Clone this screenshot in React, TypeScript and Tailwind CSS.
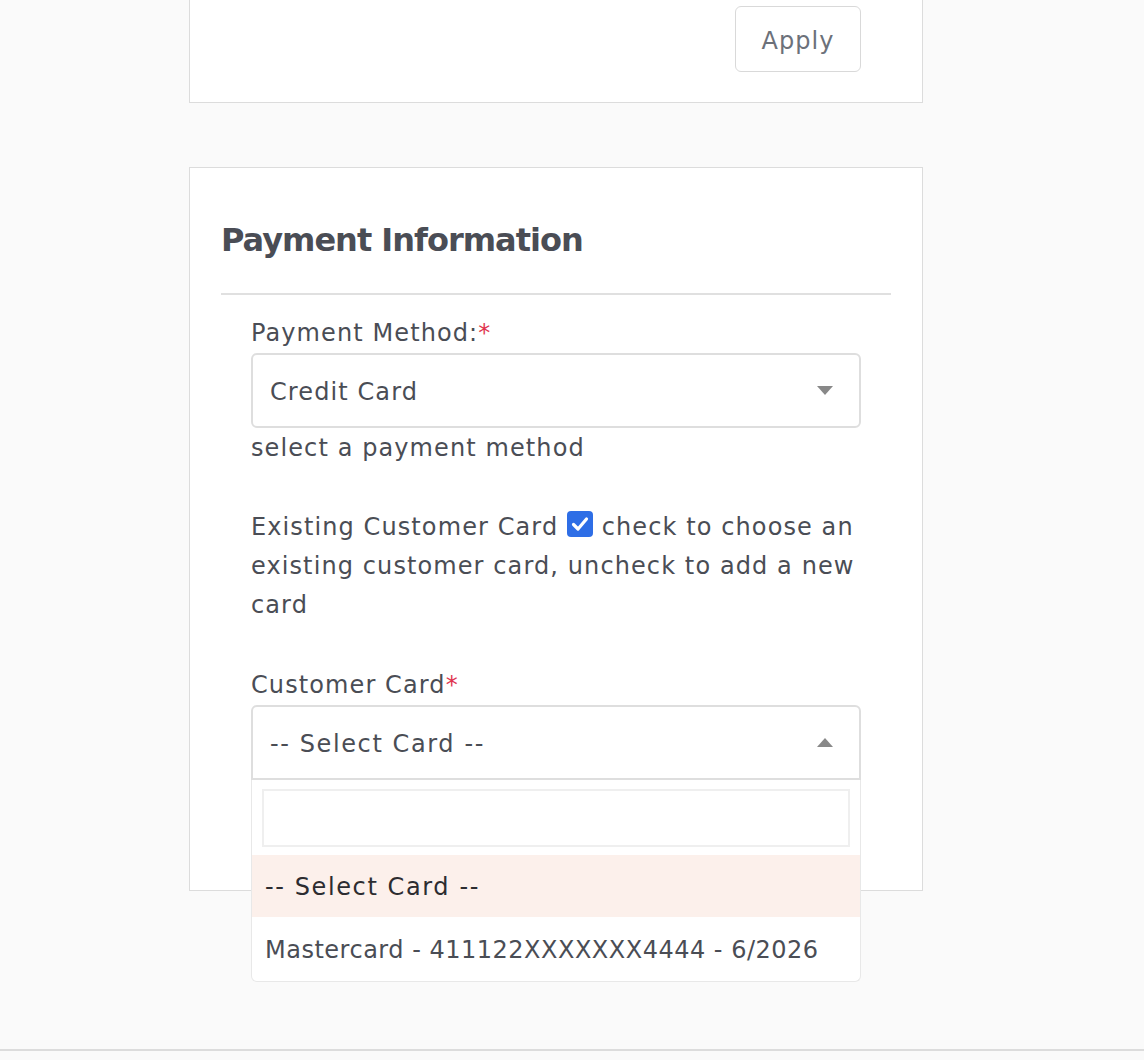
import React from "react";

const font = { fontFamily: '"DejaVu Sans", "Noto Sans", sans-serif' };

function Caret({ up }: { up?: boolean }) {
  return (
    <svg width="16" height="9" viewBox="0 0 16 9" className="block">
      {up ? <polygon points="0,9 16,9 8,0" fill="#888888" /> : <polygon points="0,0 16,0 8,9" fill="#888888" />}
    </svg>
  );
}

export default function App() {
  return (
    <div className="min-h-[1060px] w-full bg-[#fafafa] text-[#4a4d55]" style={font}>
      <div className="flex flex-col" style={{ height: 1049 }}>
        <div className="ml-[189px] w-[734px] h-[103px] bg-white border-x border-b border-[#dcdcdc] flex justify-end items-start pr-[61px] pt-[6px]">
          <button className="w-[126px] h-[66px] rounded-[6px] border border-[#d9d9d9] bg-white text-[24px] text-[#6c717a] tracking-[1px] pt-[3px]">
            Apply
          </button>
        </div>

        <div className="ml-[189px] mt-[64px] w-[734px] h-[724px] bg-white border border-[#dcdcdc] px-[31px] pt-[52px]">
          <h2 className="text-[32px] leading-[41px] font-semibold text-[#4a4d55] tracking-[-1px]">Payment Information</h2>
          <div className="mt-[32px] h-[2px] bg-[#e0e0e0]" />
          <div className="ml-[30px] mr-[30px] mt-[19px] flex flex-col text-[24px] leading-[39px] tracking-[1.1px]">
            <label>
              Payment Method:<span className="text-[#e0344f]">*</span>
            </label>
            <div className="h-[75px] rounded-[6px] border-2 border-[#dedede] flex items-center justify-between pl-[17px] pr-[26px]">
              <span className="pt-[4px]">Credit Card</span>
              <Caret />
            </div>
            <p className="pt-[1px]">select a payment method</p>

            <p className="mt-[40px]">
              Existing Customer Card{" "}
              <span className="inline-block align-[-2px] w-[26px] h-[26px] rounded-[4px] bg-[#2e6ee6]">
                <svg viewBox="0 0 26 26" width="26" height="26">
                  <path d="M6.5 13.5 L11 18 L19.5 8" fill="none" stroke="#ffffff" strokeWidth="3.2" strokeLinecap="round" strokeLinejoin="round" />
                </svg>
              </span>{" "}
              check to choose an existing customer card, uncheck to add a new card
            </p>

            <label className="mt-[41px]">
              Customer Card<span className="text-[#e0344f]">*</span>
            </label>
            <div className="relative">
              <div className="h-[75px] rounded-t-[6px] border-2 border-[#dedede] flex items-center justify-between pl-[17px] pr-[26px]">
                <span className="pt-[4px] tracking-[1.6px]">-- Select Card --</span>
                <Caret up />
              </div>
              <div className="absolute left-0 right-0 top-[75px] bg-white border-x border-b border-[#e8e8e8] rounded-b-[6px] z-10">
                <div className="px-[10px] pt-[9px] pb-[8px]">
                  <div className="h-[58px] border-2 border-[#efefef]" />
                </div>
                <div className="h-[62px] bg-[#fcf0eb] flex items-center pl-[13px] pt-[2px] text-[#2c2c30] tracking-[1.6px]">-- Select Card --</div>
                <div className="h-[64px] flex items-center pl-[13px] pt-[2px] tracking-[0.5px]">Mastercard - 411122XXXXXXX4444 - 6/2026</div>
              </div>
            </div>
          </div>
        </div>
      </div>
      <div className="h-[2px] bg-[#dcdcdc]" />
    </div>
  );
}
